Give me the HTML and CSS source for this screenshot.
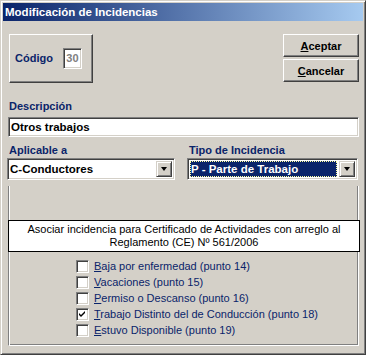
FILE: index.html
```html
<!DOCTYPE html>
<html lang="es">
<head>
<meta charset="utf-8">
<title>Modificación de Incidencias</title>
<link rel="stylesheet" href="styles.css">
</head>
<body>
<div class="window">
  <div class="titlebar">Modificación de Incidencias</div>
  <div class="content">
    <div class="top-row">
      <div class="code-box">
        <span class="label">Código</span>
        <span class="code-input">30</span>
      </div>
      <div class="buttons">
        <button class="btn"><u>A</u>ceptar</button>
        <button class="btn"><u>C</u>ancelar</button>
      </div>
    </div>

    <div class="label field-label">Descripción</div>
    <div class="text-input">Otros trabajos</div>

    <div class="two-col">
      <div class="col">
        <div class="label field-label2">Aplicable a</div>
        <div class="combo">
          <span class="combo-text">C-Conductores</span>
          <span class="combo-btn"><span class="arrow"></span></span>
        </div>
      </div>
      <div class="col">
        <div class="label field-label2">Tipo de Incidencia</div>
        <div class="combo">
          <span class="combo-text selected">P - Parte de Trabajo</span>
          <span class="combo-btn"><span class="arrow"></span></span>
        </div>
      </div>
    </div>

    <div class="group">
      <div class="group-head">Asociar incidencia para Certificado de Actividades con arreglo al<br>Reglamento (CE) Nº 561/2006</div>
      <ul class="checks">
        <li><span class="cb"></span><span class="cb-label"><u>B</u>aja por enfermedad (punto 14)</span></li>
        <li><span class="cb"></span><span class="cb-label"><u>V</u>acaciones (punto 15)</span></li>
        <li><span class="cb"></span><span class="cb-label"><u>P</u>ermiso o Descanso (punto 16)</span></li>
        <li><span class="cb checked"><svg width="9" height="9" viewBox="0 0 9 9"><path d="M1 3 L3 5 L7 1 L7 3 L3 7 L1 5 Z" fill="#000"/></svg></span><span class="cb-label"><u>T</u>rabajo Distinto del de Conducción (punto 18)</span></li>
        <li><span class="cb"></span><span class="cb-label"><u>E</u>stuvo Disponible (punto 19)</span></li>
      </ul>
    </div>
  </div>
</div>
</body>
</html>
```

FILE: styles.css
```css
html, body {
  margin: 0;
  padding: 0;
  background: #d4d0c8;
}
body {
  width: 366px;
  height: 355px;
  overflow: hidden;
  font-family: "Liberation Sans", Arial, sans-serif;
  font-size: 11px;
}
.window {
  box-sizing: border-box;
  width: 366px;
  height: 355px;
  background: #d4d0c8;
  border-top: 1px solid #d4d0c8;
  border-left: 1px solid #d4d0c8;
  border-right: 1px solid #404040;
  border-bottom: 1px solid #404040;
  box-shadow: inset 1px 1px 0 #ffffff, inset -1px -1px 0 #808080;
  padding: 2px;
  display: flex;
  flex-direction: column;
}
.titlebar {
  height: 18px;
  line-height: 18px;
  padding-left: 2px;
  color: #fff;
  font-weight: bold;
  font-size: 11.5px;
  background: linear-gradient(to right, #0a246a, #a6caf0);
  white-space: nowrap;
}
.content {
  padding: 0 2px 0 4px;
  display: flex;
  flex-direction: column;
}
.top-row {
  display: flex;
  justify-content: space-between;
  align-items: flex-start;
  margin-top: 13px;
}
.label {
  color: #0a246a;
  font-weight: bold;
  font-size: 11px;
  line-height: 13px;
}
.code-box {
  box-sizing: border-box;
  margin-left: 2px;
  width: 84px;
  height: 49px;
  border-top: 1px solid #fff;
  border-left: 1px solid #fff;
  border-right: 1px solid #404040;
  border-bottom: 1px solid #404040;
  box-shadow: inset -1px -1px 0 #808080;
  display: flex;
  align-items: center;
  padding-left: 5px;
  gap: 10px;
}
.code-input {
  box-sizing: border-box;
  width: 19px;
  height: 21px;
  background: #fff;
  border-top: 1px solid #808080;
  border-left: 1px solid #808080;
  border-right: 1px solid #fff;
  border-bottom: 1px solid #fff;
  box-shadow: inset 1px 1px 0 #404040, inset -1px -1px 0 #d4d0c8;
  color: #808080;
  font-weight: bold;
  font-size: 11px;
  line-height: 19px;
  text-align: center;
}
.buttons {
  display: flex;
  flex-direction: column;
  gap: 2px;
  margin-right: 2px;
}
.btn {
  box-sizing: border-box;
  width: 76px;
  height: 23px;
  margin: 0;
  padding: 0;
  background: #d4d0c8;
  border-top: 1px solid #fff;
  border-left: 1px solid #fff;
  border-right: 1px solid #404040;
  border-bottom: 1px solid #404040;
  box-shadow: inset -1px -1px 0 #808080;
  font-family: "Liberation Sans", Arial, sans-serif;
  font-weight: bold;
  font-size: 11px;
  color: #000;
}
.field-label {
  margin: 17px 0 0 2px;
}
.text-input {
  box-sizing: border-box;
  margin: 4px 2px 0 1px;
  height: 20px;
  background: #fff;
  border-top: 1px solid #808080;
  border-left: 1px solid #808080;
  border-right: 1px solid #fff;
  border-bottom: 1px solid #fff;
  box-shadow: inset 1px 1px 0 #404040, inset -1px -1px 0 #d4d0c8;
  padding-left: 2px;
  font-weight: bold;
  font-size: 11.5px;
  line-height: 18px;
  color: #000;
}
.two-col {
  display: grid;
  grid-template-columns: 168px 171px;
  column-gap: 12px;
  margin-top: 7px;
}
.field-label2 {
  margin-left: 2px;
}
.combo {
  box-sizing: border-box;
  margin-top: 1px;
  height: 22px;
  background: #fff;
  border-top: 1px solid #808080;
  border-left: 1px solid #808080;
  border-right: 1px solid #fff;
  border-bottom: 1px solid #fff;
  box-shadow: inset 1px 1px 0 #404040, inset -1px -1px 0 #d4d0c8;
  padding: 2px;
  display: flex;
  gap: 2px;
}
.combo-text {
  flex: 1;
  font-weight: bold;
  font-size: 11.5px;
  line-height: 16px;
  padding-left: 0;
  color: #000;
  white-space: nowrap;
}
.combo-text.selected {
  padding-left: 1px;
  background: #0a246a;
  color: #fff;
  outline: 1px dotted #ffffa0;
  outline-offset: -1px;
}
.combo-btn {
  box-sizing: border-box;
  width: 16px;
  height: 16px;
  background: #d4d0c8;
  border-top: 1px solid #d4d0c8;
  border-left: 1px solid #d4d0c8;
  border-right: 1px solid #404040;
  border-bottom: 1px solid #404040;
  box-shadow: inset 1px 1px 0 #fff, inset -1px -1px 0 #808080;
  display: flex;
  align-items: center;
  justify-content: center;
}
.arrow {
  width: 0;
  height: 0;
  border-left: 3.5px solid transparent;
  border-right: 3.5px solid transparent;
  border-top: 4px solid #000;
}
.group {
  margin: 6px 2px 0 1px;
  height: 160px;
  box-sizing: border-box;
  border-left: 1px solid #808080;
  border-right: 1px solid #fff;
  border-bottom: 1px solid #fff;
  box-shadow: inset 1px 0 0 #fff, inset -1px 0 0 #808080, inset 0 -1px 0 #808080;
  padding-top: 34px;
}
.group-head {
  box-sizing: border-box;
  margin: 0 -2px 0 -1px;
  height: 32px;
  background: #fff;
  border: 1px solid #000;
  padding-top: 2px;
  text-align: center;
  font-size: 11px;
  line-height: 13px;
  color: #000;
}
.checks {
  list-style: none;
  margin: 8px 0 0 67px;
  padding: 0;
  display: flex;
  flex-direction: column;
  gap: 3px;
}
.checks li {
  display: flex;
  align-items: center;
  gap: 5px;
  height: 13px;
}
.cb {
  box-sizing: border-box;
  width: 13px;
  height: 13px;
  background: #fff;
  border-top: 1px solid #808080;
  border-left: 1px solid #808080;
  border-right: 1px solid #fff;
  border-bottom: 1px solid #fff;
  box-shadow: inset 1px 1px 0 #404040, inset -1px -1px 0 #d4d0c8;
  display: flex;
  align-items: center;
  justify-content: center;
  flex: none;
}
.cb-label {
  color: #0a246a;
  font-size: 11px;
  line-height: 13px;
  white-space: nowrap;
}
```
